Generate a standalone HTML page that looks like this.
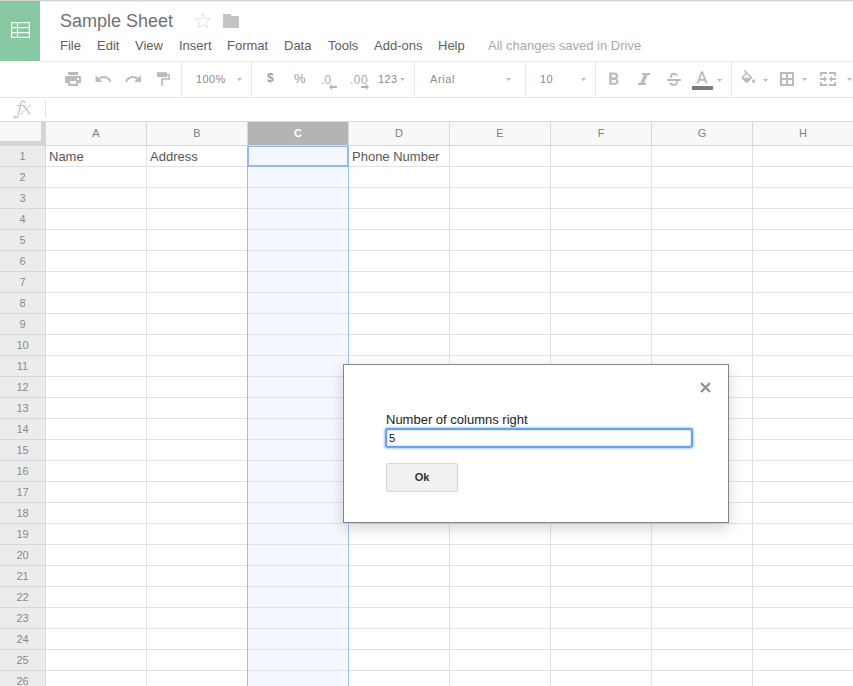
<!DOCTYPE html><html><head><meta charset="utf-8"><style>
*{box-sizing:border-box;margin:0;padding:0}
html,body{width:853px;height:686px;overflow:hidden;background:#fff;font-family:"Liberation Sans",sans-serif}
.abs{position:absolute}
.hl{position:absolute;height:1px}
.vl{position:absolute;width:1px}
.t{position:absolute;white-space:nowrap;line-height:1}
</style></head><body>
<div class="hl" style="left:0;top:0;width:853px;background:#d2d2d2"></div>
<div class="hl" style="left:0;top:1px;width:853px;background:#f0f0f0"></div>
<div class="abs" style="left:0;top:1px;width:40px;height:60px;background:#87c7a1"></div>
<svg class="abs" style="left:0;top:0" width="40" height="61"><g fill="none" stroke="#fff" stroke-width="1.2"><rect x="11.6" y="22.6" width="17.8" height="14.8"/><line x1="17.5" y1="22.6" x2="17.5" y2="37.4"/><line x1="11.6" y1="27.6" x2="29.4" y2="27.6"/><line x1="11.6" y1="32.6" x2="29.4" y2="32.6"/></g></svg>
<div class="t" style="left:60px;top:12px;font-size:18px;color:#727272">Sample Sheet</div>
<svg class="abs" style="left:194px;top:12px" width="18" height="17" viewBox="0 0 18 17"><polygon points="9,1.2 11.1,6.6 16.8,6.7 12.3,10.2 13.9,15.8 9,12.6 4.1,15.8 5.7,10.2 1.2,6.7 6.9,6.6" fill="none" stroke="#e0e0e0" stroke-width="0.9"/></svg>
<svg class="abs" style="left:223px;top:14px" width="16" height="14" viewBox="0 0 16 14"><path d="M0 0H7L9 2H16V14H0Z" fill="#c4c4c4"/></svg>
<div class="t" style="left:60px;top:39px;font-size:13px;color:#606060">File</div>
<div class="t" style="left:97px;top:39px;font-size:13px;color:#606060">Edit</div>
<div class="t" style="left:135px;top:39px;font-size:13px;color:#606060">View</div>
<div class="t" style="left:179px;top:39px;font-size:13px;color:#606060">Insert</div>
<div class="t" style="left:227px;top:39px;font-size:13px;color:#606060">Format</div>
<div class="t" style="left:284px;top:39px;font-size:13px;color:#606060">Data</div>
<div class="t" style="left:328px;top:39px;font-size:13px;color:#606060">Tools</div>
<div class="t" style="left:374px;top:39px;font-size:13px;color:#606060">Add-ons</div>
<div class="t" style="left:438px;top:39px;font-size:13px;color:#606060">Help</div>
<div class="t" style="left:488px;top:39px;font-size:13px;color:#aaa">All changes saved in Drive</div>
<div class="hl" style="left:40px;top:61px;width:813px;background:#e9e9e9"></div>
<div class="hl" style="left:0;top:97px;width:853px;background:#e5e5e5"></div>
<div class="vl" style="left:181px;top:62px;height:35px;background:#e8e8e8"></div>
<div class="vl" style="left:251px;top:62px;height:35px;background:#e8e8e8"></div>
<div class="vl" style="left:414px;top:62px;height:35px;background:#e8e8e8"></div>
<div class="vl" style="left:525px;top:62px;height:35px;background:#e8e8e8"></div>
<div class="vl" style="left:595px;top:62px;height:35px;background:#e8e8e8"></div>
<div class="vl" style="left:731px;top:62px;height:35px;background:#e8e8e8"></div>
<svg class="abs" style="left:65px;top:72px" width="16" height="14" viewBox="0 0 16 14"><g fill="#bbbbbb"><rect x="3" y="0" width="10" height="3"/><path d="M1 4h14a1 1 0 0 1 1 1v6h-3v3h-10v-3h-3v-6a1 1 0 0 1 1-1z"/></g><rect x="5" y="9" width="6" height="3" fill="#fff"/><rect x="12" y="6" width="2" height="2" fill="#fff"/></svg>
<svg class="abs" style="left:93.9px;top:69.6px" width="18.5" height="18.1" viewBox="0 0 24 24" preserveAspectRatio="none"><path fill="#bbbbbb" d="M12.5 8c-2.65 0-5.05.99-6.9 2.6L2 7v9h9l-3.62-3.62c1.39-1.16 3.16-1.88 5.12-1.88 3.54 0 6.55 2.31 7.6 5.5l2.37-.78C21.08 11.03 17.15 8 12.5 8z"/></svg>
<svg class="abs" style="left:124px;top:69.6px" width="18.5" height="18.1" viewBox="0 0 24 24" preserveAspectRatio="none"><path fill="#bbbbbb" d="M18.4 10.6C16.55 8.99 14.15 8 11.5 8c-4.65 0-8.58 3.03-9.96 7.22L3.9 16c1.05-3.19 4.05-5.5 7.6-5.5 1.95 0 3.73.72 5.12 1.88L13 16h9V7l-3.6 3.6z"/></svg>
<svg class="abs" style="left:157px;top:72px" width="14" height="14" viewBox="0 0 14 14"><g fill="#bbbbbb"><rect x="0" y="0.2" width="10" height="4.8"/><rect x="9.8" y="2.1" width="3.2" height="1.5"/><rect x="11.5" y="2.1" width="1.5" height="5.6"/><rect x="4.1" y="6.2" width="8.9" height="1.5"/><rect x="4.1" y="6.2" width="1.8" height="7.6"/></g></svg>
<div class="t" style="left:196px;top:74px;font-size:11px;letter-spacing:0.4px;color:#8c8c8c">100%</div>
<svg class="abs" style="left:237px;top:78px" width="5" height="3" viewBox="0 0 5 3"><path d="M0 0h5l-2.5 3z" fill="#bbb"/></svg>
<div class="t" style="left:267px;top:72px;font-size:12px;font-weight:bold;color:#a0a0a0">$</div>
<div class="t" style="left:294px;top:72px;font-size:13px;color:#999">%</div>
<div class="t" style="left:321px;top:74px;font-size:12px;color:#aaa">.0</div>
<div class="t" style="left:350px;top:74px;font-size:12px;letter-spacing:0.5px;color:#aaa">.00</div>
<svg class="abs" style="left:329px;top:84px" width="8" height="6" viewBox="0 0 8 6"><path d="M0 3l3-3v2h5v2h-5v2z" fill="#b4b4b4"/></svg>
<svg class="abs" style="left:361px;top:84px" width="8" height="6" viewBox="0 0 8 6"><path d="M8 3l-3-3v2h-5v2h5v2z" fill="#b4b4b4"/></svg>
<div class="t" style="left:378px;top:74px;font-size:11px;letter-spacing:0.4px;color:#8c8c8c">123</div>
<svg class="abs" style="left:400px;top:78px" width="5" height="3" viewBox="0 0 5 3"><path d="M0 0h5l-2.5 3z" fill="#bbb"/></svg>
<div class="t" style="left:430px;top:74px;font-size:11px;letter-spacing:0.6px;color:#8c8c8c">Arial</div>
<svg class="abs" style="left:506px;top:78px" width="5" height="3" viewBox="0 0 5 3"><path d="M0 0h5l-2.5 3z" fill="#bbb"/></svg>
<div class="t" style="left:540px;top:74px;font-size:11px;letter-spacing:0.4px;color:#8c8c8c">10</div>
<svg class="abs" style="left:581px;top:78px" width="5" height="3" viewBox="0 0 5 3"><path d="M0 0h5l-2.5 3z" fill="#bbb"/></svg>
<svg class="abs" style="left:602.6px;top:69.2px" width="21.12" height="21.12" viewBox="0 0 24 24"><path fill="#bbbbbb" d="M15.6 10.79c.97-.67 1.65-1.77 1.65-2.79 0-2.26-1.75-4-4-4H7v14h7.04c2.09 0 3.710-1.7 3.71-3.79 0-1.52-.86-2.82-2.150-3.42zM10 6.5h3c.83 0 1.5.67 1.5 1.5s-.67 1.5-1.5 1.5h-3v-3zm3.5 9H10v-3h3.5c.83 0 1.5.67 1.5 1.5s-.67 1.5-1.5 1.5z"/></svg>
<svg class="abs" style="left:636px;top:71px" width="16" height="16" viewBox="0 0 16 16"><path fill="#bbbbbb" d="M6 2H14V4H11.6L8.2 12H10V14H2V12H4.4L7.8 4H6Z"/></svg>
<svg class="abs" style="left:660px;top:66px" width="30" height="26" viewBox="660 66 30 26"><g fill="none" stroke="#bbbbbb" stroke-width="1.9"><path d="M671.2 77.8C670.2 75.2 672 73.7 674 73.7C675.6 73.7 676.7 74.5 677.3 75.7"/><path d="M676.8 81.2C677.6 83.4 676 84.9 673.8 84.9C672 84.9 670.6 84 670 82.6"/></g><rect x="667" y="79" width="14" height="2" fill="#bbbbbb"/></svg>
<svg class="abs" style="left:691.6px;top:68.9px" width="20.06" height="20.06" viewBox="0 0 24 24"><path fill="#bbbbbb" stroke="#bbbbbb" stroke-width="0.35" d="M11 3L5.5 17h2.25l1.12-3h6.25l1.12 3h2.25L13 3h-2zm-1.38 9L12 5.67 14.38 12H9.62z"/></svg>
<div class="abs" style="left:692px;top:86px;width:21px;height:4px;background:#7c7c7c"></div>
<svg class="abs" style="left:717px;top:79px" width="5" height="3" viewBox="0 0 5 3"><path d="M0 0h5l-2.5 3z" fill="#bbb"/></svg>
<svg class="abs" style="left:738.6px;top:70.1px" width="18.5" height="18.5" viewBox="0 0 24 24"><path fill="#bbbbbb" d="M16.56 8.94L7.62 0 6.21 1.41l2.38 2.38-5.15 5.15c-.59.59-.59 1.54 0 2.12l5.5 5.5c.29.29.68.44 1.06.44s.77-.15 1.06-.44l5.5-5.5c.59-.58.59-1.53 0-2.12zM5.21 10L10 5.21 14.79 10H5.21zM19 11.5s-2 2.17-2 3.5c0 1.1.9 2 2 2s2-.9 2-2c0-1.33-2-3.5-2-3.5z"/></svg>
<svg class="abs" style="left:763px;top:79px" width="5" height="3" viewBox="0 0 5 3"><path d="M0 0h5l-2.5 3z" fill="#bbb"/></svg>
<svg class="abs" style="left:780px;top:72px" width="14" height="14" viewBox="0 0 14 14"><path fill="#bbbbbb" fill-rule="evenodd" d="M0 0h14v14h-14z M2 2h4v4h-4z M8 2h4v4h-4z M2 8h4v4h-4z M8 8h4v4h-4z"/></svg>
<svg class="abs" style="left:802px;top:78px" width="5" height="3" viewBox="0 0 5 3"><path d="M0 0h5l-2.5 3z" fill="#bbb"/></svg>
<svg class="abs" style="left:820px;top:72px" width="16" height="14" viewBox="0 0 16 14"><g fill="#bbbbbb"><rect x="0" y="0" width="2" height="4"/><rect x="0" y="0" width="7" height="2"/><rect x="14" y="0" width="2" height="4"/><rect x="9" y="0" width="7" height="2"/><rect x="0" y="10" width="2" height="4"/><rect x="0" y="12" width="7" height="2"/><rect x="14" y="10" width="2" height="4"/><rect x="9" y="12" width="7" height="2"/><path d="M0 6h4v-2l3 3-3 3v-2h-4z"/><path d="M16 6h-4v-2l-3 3 3 3v-2h4z"/></g></svg>
<svg class="abs" style="left:847px;top:78px" width="5" height="3" viewBox="0 0 5 3"><path d="M0 0h5l-2.5 3z" fill="#bbb"/></svg>
<svg class="abs" style="left:10px;top:98px" width="24" height="24" viewBox="0 0 24 24"><g fill="none" stroke="#c6c6c6" stroke-linecap="round"><path d="M14.6 4.2C14.3 2.7 12.3 2.3 11.2 4C10.2 5.8 9.7 11.5 8.6 15.8C7.9 18.8 6.6 20.2 4.6 19.6" stroke-width="1.3"/><path d="M7.4 7.5H13.8" stroke-width="1"/><path d="M11.6 15.5L20.2 7.4" stroke-width="0.9"/><path d="M14.2 8.2L19.4 15.6" stroke-width="1.4"/><path d="M13.2 7.9H15.4M18.5 15.6H20.4M11 15.6H12.8M19.3 7.5H20.8" stroke-width="0.8"/></g><circle cx="14.4" cy="4.2" r="1" fill="#c6c6c6"/><circle cx="4.4" cy="18.8" r="1.1" fill="#c6c6c6"/></svg>
<div class="vl" style="left:45px;top:101px;height:17px;background:#e0e0e0"></div>
<div class="hl" style="left:0;top:121px;width:853px;background:#dadada"></div>
<div class="abs" style="left:0;top:122px;width:853px;height:23px;background:#f8f8f8"></div>
<div class="abs" style="left:0;top:146px;width:45px;height:540px;background:#ececec"></div>
<div class="abs" style="left:247px;top:122px;width:101px;height:23px;background:#b4b4b4"></div>
<div class="abs" style="left:41px;top:122px;width:4px;height:23px;background:#d4d4d4"></div>
<div class="abs" style="left:0;top:141px;width:45px;height:4px;background:#d4d4d4"></div>
<div class="hl" style="left:0;top:145px;width:853px;background:#d8d8d8"></div>
<div class="hl" style="left:0;top:166px;width:45px;background:#d6d6d6"></div>
<div class="hl" style="left:46px;top:166px;width:807px;background:#e2e2e2"></div>
<div class="hl" style="left:0;top:187px;width:45px;background:#d6d6d6"></div>
<div class="hl" style="left:46px;top:187px;width:807px;background:#e2e2e2"></div>
<div class="hl" style="left:0;top:208px;width:45px;background:#d6d6d6"></div>
<div class="hl" style="left:46px;top:208px;width:807px;background:#e2e2e2"></div>
<div class="hl" style="left:0;top:229px;width:45px;background:#d6d6d6"></div>
<div class="hl" style="left:46px;top:229px;width:807px;background:#e2e2e2"></div>
<div class="hl" style="left:0;top:250px;width:45px;background:#d6d6d6"></div>
<div class="hl" style="left:46px;top:250px;width:807px;background:#e2e2e2"></div>
<div class="hl" style="left:0;top:271px;width:45px;background:#d6d6d6"></div>
<div class="hl" style="left:46px;top:271px;width:807px;background:#e2e2e2"></div>
<div class="hl" style="left:0;top:292px;width:45px;background:#d6d6d6"></div>
<div class="hl" style="left:46px;top:292px;width:807px;background:#e2e2e2"></div>
<div class="hl" style="left:0;top:313px;width:45px;background:#d6d6d6"></div>
<div class="hl" style="left:46px;top:313px;width:807px;background:#e2e2e2"></div>
<div class="hl" style="left:0;top:334px;width:45px;background:#d6d6d6"></div>
<div class="hl" style="left:46px;top:334px;width:807px;background:#e2e2e2"></div>
<div class="hl" style="left:0;top:355px;width:45px;background:#d6d6d6"></div>
<div class="hl" style="left:46px;top:355px;width:807px;background:#e2e2e2"></div>
<div class="hl" style="left:0;top:376px;width:45px;background:#d6d6d6"></div>
<div class="hl" style="left:46px;top:376px;width:807px;background:#e2e2e2"></div>
<div class="hl" style="left:0;top:397px;width:45px;background:#d6d6d6"></div>
<div class="hl" style="left:46px;top:397px;width:807px;background:#e2e2e2"></div>
<div class="hl" style="left:0;top:418px;width:45px;background:#d6d6d6"></div>
<div class="hl" style="left:46px;top:418px;width:807px;background:#e2e2e2"></div>
<div class="hl" style="left:0;top:439px;width:45px;background:#d6d6d6"></div>
<div class="hl" style="left:46px;top:439px;width:807px;background:#e2e2e2"></div>
<div class="hl" style="left:0;top:460px;width:45px;background:#d6d6d6"></div>
<div class="hl" style="left:46px;top:460px;width:807px;background:#e2e2e2"></div>
<div class="hl" style="left:0;top:481px;width:45px;background:#d6d6d6"></div>
<div class="hl" style="left:46px;top:481px;width:807px;background:#e2e2e2"></div>
<div class="hl" style="left:0;top:502px;width:45px;background:#d6d6d6"></div>
<div class="hl" style="left:46px;top:502px;width:807px;background:#e2e2e2"></div>
<div class="hl" style="left:0;top:523px;width:45px;background:#d6d6d6"></div>
<div class="hl" style="left:46px;top:523px;width:807px;background:#e2e2e2"></div>
<div class="hl" style="left:0;top:544px;width:45px;background:#d6d6d6"></div>
<div class="hl" style="left:46px;top:544px;width:807px;background:#e2e2e2"></div>
<div class="hl" style="left:0;top:565px;width:45px;background:#d6d6d6"></div>
<div class="hl" style="left:46px;top:565px;width:807px;background:#e2e2e2"></div>
<div class="hl" style="left:0;top:586px;width:45px;background:#d6d6d6"></div>
<div class="hl" style="left:46px;top:586px;width:807px;background:#e2e2e2"></div>
<div class="hl" style="left:0;top:607px;width:45px;background:#d6d6d6"></div>
<div class="hl" style="left:46px;top:607px;width:807px;background:#e2e2e2"></div>
<div class="hl" style="left:0;top:628px;width:45px;background:#d6d6d6"></div>
<div class="hl" style="left:46px;top:628px;width:807px;background:#e2e2e2"></div>
<div class="hl" style="left:0;top:649px;width:45px;background:#d6d6d6"></div>
<div class="hl" style="left:46px;top:649px;width:807px;background:#e2e2e2"></div>
<div class="hl" style="left:0;top:670px;width:45px;background:#d6d6d6"></div>
<div class="hl" style="left:46px;top:670px;width:807px;background:#e2e2e2"></div>
<div class="hl" style="left:0;top:691px;width:45px;background:#d6d6d6"></div>
<div class="hl" style="left:46px;top:691px;width:807px;background:#e2e2e2"></div>
<div class="vl" style="left:45px;top:122px;height:564px;background:#d8d8d8"></div>
<div class="vl" style="left:146px;top:146px;height:540px;background:#e2e2e2"></div>
<div class="vl" style="left:146px;top:122px;height:23px;background:#d8d8d8"></div>
<div class="vl" style="left:247px;top:146px;height:540px;background:#e2e2e2"></div>
<div class="vl" style="left:247px;top:122px;height:23px;background:#d8d8d8"></div>
<div class="vl" style="left:348px;top:146px;height:540px;background:#e2e2e2"></div>
<div class="vl" style="left:348px;top:122px;height:23px;background:#d8d8d8"></div>
<div class="vl" style="left:449px;top:146px;height:540px;background:#e2e2e2"></div>
<div class="vl" style="left:449px;top:122px;height:23px;background:#d8d8d8"></div>
<div class="vl" style="left:550px;top:146px;height:540px;background:#e2e2e2"></div>
<div class="vl" style="left:550px;top:122px;height:23px;background:#d8d8d8"></div>
<div class="vl" style="left:651px;top:146px;height:540px;background:#e2e2e2"></div>
<div class="vl" style="left:651px;top:122px;height:23px;background:#d8d8d8"></div>
<div class="vl" style="left:752px;top:146px;height:540px;background:#e2e2e2"></div>
<div class="vl" style="left:752px;top:122px;height:23px;background:#d8d8d8"></div>
<div class="t" style="left:46px;width:100px;text-align:center;top:128px;font-size:11px;color:#808080">A</div>
<div class="t" style="left:147px;width:100px;text-align:center;top:128px;font-size:11px;color:#808080">B</div>
<div class="t" style="left:248px;width:100px;text-align:center;top:128px;font-size:11px;font-weight:bold;color:#fff">C</div>
<div class="t" style="left:349px;width:100px;text-align:center;top:128px;font-size:11px;color:#808080">D</div>
<div class="t" style="left:450px;width:100px;text-align:center;top:128px;font-size:11px;color:#808080">E</div>
<div class="t" style="left:551px;width:100px;text-align:center;top:128px;font-size:11px;color:#808080">F</div>
<div class="t" style="left:652px;width:100px;text-align:center;top:128px;font-size:11px;color:#808080">G</div>
<div class="t" style="left:753px;width:100px;text-align:center;top:128px;font-size:11px;color:#808080">H</div>
<div class="t" style="left:0;width:45px;text-align:center;top:151px;font-size:11px;color:#8a8a8a">1</div>
<div class="t" style="left:0;width:45px;text-align:center;top:172px;font-size:11px;color:#8a8a8a">2</div>
<div class="t" style="left:0;width:45px;text-align:center;top:193px;font-size:11px;color:#8a8a8a">3</div>
<div class="t" style="left:0;width:45px;text-align:center;top:214px;font-size:11px;color:#8a8a8a">4</div>
<div class="t" style="left:0;width:45px;text-align:center;top:235px;font-size:11px;color:#8a8a8a">5</div>
<div class="t" style="left:0;width:45px;text-align:center;top:256px;font-size:11px;color:#8a8a8a">6</div>
<div class="t" style="left:0;width:45px;text-align:center;top:277px;font-size:11px;color:#8a8a8a">7</div>
<div class="t" style="left:0;width:45px;text-align:center;top:298px;font-size:11px;color:#8a8a8a">8</div>
<div class="t" style="left:0;width:45px;text-align:center;top:319px;font-size:11px;color:#8a8a8a">9</div>
<div class="t" style="left:0;width:45px;text-align:center;top:340px;font-size:11px;color:#8a8a8a">10</div>
<div class="t" style="left:0;width:45px;text-align:center;top:361px;font-size:11px;color:#8a8a8a">11</div>
<div class="t" style="left:0;width:45px;text-align:center;top:382px;font-size:11px;color:#8a8a8a">12</div>
<div class="t" style="left:0;width:45px;text-align:center;top:403px;font-size:11px;color:#8a8a8a">13</div>
<div class="t" style="left:0;width:45px;text-align:center;top:424px;font-size:11px;color:#8a8a8a">14</div>
<div class="t" style="left:0;width:45px;text-align:center;top:445px;font-size:11px;color:#8a8a8a">15</div>
<div class="t" style="left:0;width:45px;text-align:center;top:466px;font-size:11px;color:#8a8a8a">16</div>
<div class="t" style="left:0;width:45px;text-align:center;top:487px;font-size:11px;color:#8a8a8a">17</div>
<div class="t" style="left:0;width:45px;text-align:center;top:508px;font-size:11px;color:#8a8a8a">18</div>
<div class="t" style="left:0;width:45px;text-align:center;top:529px;font-size:11px;color:#8a8a8a">19</div>
<div class="t" style="left:0;width:45px;text-align:center;top:550px;font-size:11px;color:#8a8a8a">20</div>
<div class="t" style="left:0;width:45px;text-align:center;top:571px;font-size:11px;color:#8a8a8a">21</div>
<div class="t" style="left:0;width:45px;text-align:center;top:592px;font-size:11px;color:#8a8a8a">22</div>
<div class="t" style="left:0;width:45px;text-align:center;top:613px;font-size:11px;color:#8a8a8a">23</div>
<div class="t" style="left:0;width:45px;text-align:center;top:634px;font-size:11px;color:#8a8a8a">24</div>
<div class="t" style="left:0;width:45px;text-align:center;top:655px;font-size:11px;color:#8a8a8a">25</div>
<div class="t" style="left:0;width:45px;text-align:center;top:676px;font-size:11px;color:#8a8a8a">26</div>
<div class="abs" style="left:248px;top:146px;width:100px;height:540px;background:#f4f7fe"></div>
<div class="hl" style="left:248px;top:166px;width:100px;background:#e0e3eb"></div>
<div class="hl" style="left:248px;top:187px;width:100px;background:#e0e3eb"></div>
<div class="hl" style="left:248px;top:208px;width:100px;background:#e0e3eb"></div>
<div class="hl" style="left:248px;top:229px;width:100px;background:#e0e3eb"></div>
<div class="hl" style="left:248px;top:250px;width:100px;background:#e0e3eb"></div>
<div class="hl" style="left:248px;top:271px;width:100px;background:#e0e3eb"></div>
<div class="hl" style="left:248px;top:292px;width:100px;background:#e0e3eb"></div>
<div class="hl" style="left:248px;top:313px;width:100px;background:#e0e3eb"></div>
<div class="hl" style="left:248px;top:334px;width:100px;background:#e0e3eb"></div>
<div class="hl" style="left:248px;top:355px;width:100px;background:#e0e3eb"></div>
<div class="hl" style="left:248px;top:376px;width:100px;background:#e0e3eb"></div>
<div class="hl" style="left:248px;top:397px;width:100px;background:#e0e3eb"></div>
<div class="hl" style="left:248px;top:418px;width:100px;background:#e0e3eb"></div>
<div class="hl" style="left:248px;top:439px;width:100px;background:#e0e3eb"></div>
<div class="hl" style="left:248px;top:460px;width:100px;background:#e0e3eb"></div>
<div class="hl" style="left:248px;top:481px;width:100px;background:#e0e3eb"></div>
<div class="hl" style="left:248px;top:502px;width:100px;background:#e0e3eb"></div>
<div class="hl" style="left:248px;top:523px;width:100px;background:#e0e3eb"></div>
<div class="hl" style="left:248px;top:544px;width:100px;background:#e0e3eb"></div>
<div class="hl" style="left:248px;top:565px;width:100px;background:#e0e3eb"></div>
<div class="hl" style="left:248px;top:586px;width:100px;background:#e0e3eb"></div>
<div class="hl" style="left:248px;top:607px;width:100px;background:#e0e3eb"></div>
<div class="hl" style="left:248px;top:628px;width:100px;background:#e0e3eb"></div>
<div class="hl" style="left:248px;top:649px;width:100px;background:#e0e3eb"></div>
<div class="hl" style="left:248px;top:670px;width:100px;background:#e0e3eb"></div>
<div class="hl" style="left:248px;top:691px;width:100px;background:#e0e3eb"></div>
<div class="vl" style="left:247px;top:146px;height:540px;background:#9dbdf8"></div>
<div class="vl" style="left:348px;top:146px;height:540px;background:#9dbdf8"></div>
<div class="abs" style="left:247px;top:146px;width:102px;height:21px;border:2px solid #93b6f6;border-top-width:1px"></div>
<div class="t" style="left:49px;top:150px;font-size:13px;color:#585858">Name</div>
<div class="t" style="left:150px;top:150px;font-size:13px;color:#585858">Address</div>
<div class="t" style="left:352px;top:150px;font-size:13px;color:#585858">Phone Number</div>
<div class="abs" style="left:343px;top:364px;width:386px;height:159px;background:#fff;border:1px solid #858585;box-shadow:0 5px 14px rgba(0,0,0,0.17)"></div>
<svg class="abs" style="left:700px;top:382px" width="11" height="11" viewBox="0 0 11 11"><path d="M1 1L10 10M10 1L1 10" stroke="#939393" stroke-width="2.4"/></svg>
<div class="t" style="left:386px;top:413px;font-size:13px;color:#222">Number of columns right</div>
<div class="abs" style="left:385px;top:428px;width:308px;height:20px;border:2px solid #68a3f1;border-radius:3px;box-shadow:0 0 2px 1px rgba(120,172,246,0.6), inset 0 0 1px 0.5px rgba(120,172,246,0.5);background:#fff"></div>
<div class="t" style="left:389px;top:433px;font-size:11px;color:#111">5</div>
<div class="abs" style="left:386px;top:463px;width:72px;height:29px;border:1px solid #d6d6d6;border-radius:2px;background:#f1f1f1"></div>
<div class="t" style="left:386px;top:472px;width:72px;text-align:center;font-size:11px;font-weight:bold;color:#333">Ok</div>
</body></html>
